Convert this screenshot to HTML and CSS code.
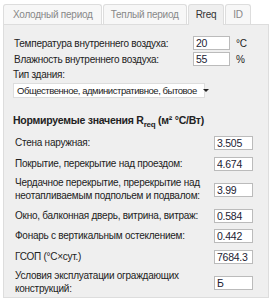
FILE: index.html
```html
<!DOCTYPE html>
<html lang="ru">
<head>
  <meta charset="UTF-8" />
  <title>Rreq</title>
  <link rel="stylesheet" href="styles.css">
</head>
<body>
  <div class="tabs">
    <ul class="tab-nav">
      <li>Холодный период</li>
      <li>Теплый период</li>
      <li class="active">Rreq</li>
      <li>ID</li>
    </ul>
    <div class="panel">
      <table class="params">
        <tr>
          <td class="label">Температура внутреннего воздуха:</td>
          <td class="field"><input type="text" value="20"></td>
          <td class="unit">°C</td>
        </tr>
        <tr>
          <td class="label">Влажность внутреннего воздуха:</td>
          <td class="field"><input type="text" value="55"></td>
          <td class="unit">%</td>
        </tr>
      </table>
      <div class="field-label">Тип здания:</div>
      <div class="select">
        <span>Общественное, административное, бытовое</span>
        <span class="caret"></span>
      </div>
      <h4>Нормируемые значения R<sub>req</sub> (м² °C/Вт)</h4>
      <table class="norms">
        <tr>
          <td class="label">Стена наружная:</td>
          <td class="field"><input type="text" value="3.505"></td>
        </tr>
        <tr>
          <td class="label">Покрытие, перекрытие над проездом:</td>
          <td class="field"><input type="text" value="4.674"></td>
        </tr>
        <tr>
          <td class="label">Чердачное перекрытие, пререкрытие над неотапливаемым подпольем и подвалом:</td>
          <td class="field"><input type="text" value="3.99"></td>
        </tr>
        <tr>
          <td class="label">Окно, балконная дверь, витрина, витраж:</td>
          <td class="field"><input type="text" value="0.584"></td>
        </tr>
        <tr>
          <td class="label">Фонарь с вертикальным остеклением:</td>
          <td class="field"><input type="text" value="0.442"></td>
        </tr>
        <tr>
          <td class="label">ГСОП (°C×сут.)</td>
          <td class="field"><input type="text" value="7684.3"></td>
        </tr>
        <tr class="last">
          <td class="label">Условия эксплуатации ограждающих конструкций:</td>
          <td class="field"><input type="text" value="Б"></td>
        </tr>
      </table>
    </div>
  </div>
</body>
</html>
```

FILE: styles.css
```css
body {
  margin: 0;
  font-family: "Liberation Sans", Arial, sans-serif;
  font-size: 10px;
  letter-spacing: -0.25px;
  color: #222;
  background: #fff;
}

.tabs {
  margin: 4px 3px 0 3px;
}

.tab-nav {
  list-style: none;
  margin: 0;
  padding: 0;
  display: flex;
  gap: 1px;
}

.tab-nav li {
  padding: 3px 7px 3px;
  line-height: 13px;
  white-space: nowrap;
  border: 1px solid #ddd;
  border-bottom: none;
  border-radius: 3px 3px 0 0;
  background: #f7f7f7;
  color: #888;
}

.tab-nav li:first-child {
  padding: 3px 8px 3px 9px;
}

.tab-nav li.active {
  background: #efefef;
  color: #333;
  margin-bottom: -1px;
  padding-bottom: 4px;
}

.panel {
  background: #efefef;
  border: 1px solid #ddd;
  padding: 10px 9px 0 9px;
}

table {
  border-collapse: collapse;
  table-layout: fixed;
  width: 100%;
}

td {
  padding: 0;
}

.params td {
  height: 16px;
  white-space: nowrap;
}

.params .label {
  width: 179px;
  padding-left: 1px;
}

.params .field {
  width: 40px;
}

.params input {
  width: 37px;
}

.params .unit {
  padding-left: 3px;
}

input {
  font-family: inherit;
  font-size: 10.5px;
  letter-spacing: inherit;
  color: #223;
  border: 1px solid #bbb;
  background: #fff;
  padding: 0 2px;
  height: 14px;
  box-sizing: border-box;
  margin: 0;
  display: block;
}

.field-label {
  margin-top: 1px;
  line-height: 14px;
}

.select {
  display: flex;
  justify-content: space-between;
  align-items: center;
  width: 192px;
  height: 15px;
  box-sizing: border-box;
  background: #fff;
  border: 1px solid #ddd;
  padding: 0 5px 0 3px;
  margin-top: 1px;
  font-size: 9.5px;
  letter-spacing: -0.45px;
  white-space: nowrap;
}

.caret {
  flex-shrink: 0;
  margin-left: 6px;
  width: 0;
  height: 0;
  border-left: 3px solid transparent;
  border-right: 3px solid transparent;
  border-top: 3px solid #222;
}

h4 {
  margin: 16px 0 6px;
  font-size: 10.5px;
  line-height: 13px;
}

sub {
  font-size: 8px;
  line-height: 0;
}

.norms td {
  padding: 3.25px 0;
  vertical-align: middle;
}

.norms .label {
  padding-left: 2px;
  padding-right: 14px;
  line-height: 12.5px;
}

.norms .field {
  width: 45px;
}

.norms input {
  width: 39px;
}

.norms .last td {
  padding-bottom: 2px;
}
```
